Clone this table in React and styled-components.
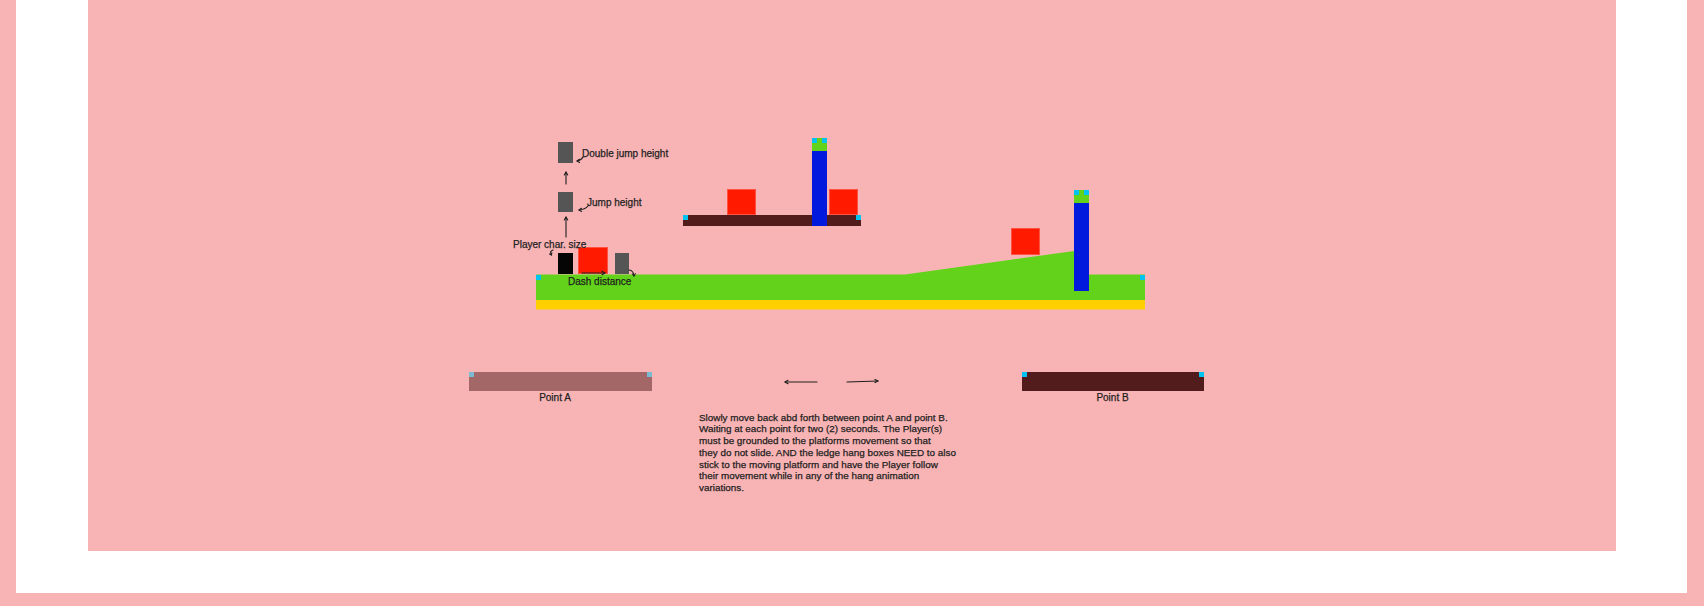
import React from "react";
import styled, { createGlobalStyle } from "styled-components";

// all diagram coordinates below are page pixels; the canvas starts at x = 88
const OX = 88;

const pink = "#f8b4b5";
const maroon = "#531c1c";
const nub = "#00c3f0";
const grass = "#62d31a";
const sand = "#ffd000";
const crate = "#ff1a00";
const steel = "#0019dd";
const ink = "#1e1e1e";

const GlobalStyle = createGlobalStyle`
  html, body {
    margin: 0;
    padding: 0;
    background: ${pink};
  }
  body {
    font-family: "Liberation Sans", Arial, sans-serif;
  }
`;

const Page = styled.div`
  height: 606px;
  box-sizing: border-box;
  padding: 0 17px 13px 16px;
  background: ${pink};
`;

const Sheet = styled.div`
  background: #ffffff;
  padding: 0 71px 42px 72px;
`;

const Canvas = styled.div`
  position: relative;
  height: 551px;
  background: ${pink};
  overflow: hidden;
`;

const Layer = styled.svg`
  position: absolute;
  inset: 0;
  width: 100%;
  height: 100%;
  pointer-events: none;
`;

const Box = styled.div`
  position: absolute;
  left: ${(p) => p.$x - OX}px;
  top: ${(p) => p.$y}px;
  width: ${(p) => p.$w}px;
  height: ${(p) => p.$h}px;
`;

const Crate = styled(Box)`
  background: ${crate};
  box-shadow: inset 0 0 0 1px rgba(255, 120, 110, 0.6);
`;

const Dummy = styled(Box)`
  background: ${(p) => (p.$dark ? "#050505" : "#555555")};
`;

const nubs = `
  &::before,
  &::after {
    content: "";
    position: absolute;
    top: 0;
    width: 5px;
    height: 5px;
    background: ${nub};
  }
  &::before {
    left: 0;
  }
  &::after {
    right: 0;
  }
`;

const Platform = styled(Box)`
  background: ${maroon};
  ${nubs}
`;

// a stop of the moving platform: the bar with its caption under it
const Station = styled.div`
  position: absolute;
  left: ${(p) => p.$x - OX}px;
  top: 372px;
  width: ${(p) => p.$w}px;
  display: flex;
  flex-direction: column;
  align-items: center;
`;

const Bar = styled.div`
  position: relative;
  align-self: stretch;
  height: 19px;
  background: ${maroon};
  opacity: ${(p) => (p.$faded ? 0.5 : 1)};
  ${nubs}
`;

const Caption = styled.span`
  margin-top: 0.5px;
  margin-right: ${(p) => p.$nudge || 0}px;
  font-size: 10px;
  line-height: 12px;
  color: ${ink};
  -webkit-text-stroke: 0.25px ${ink};
`;

const Pillar = styled(Box)`
  display: flex;
  flex-direction: column;
`;

const Cap = styled.div`
  position: relative;
  height: 13px;
  background: ${grass};
  ${nubs}
`;

const Shaft = styled.div`
  flex: 1;
  background: ${steel};
`;

const Label = styled.div`
  position: absolute;
  left: ${(p) => p.$x - OX}px;
  top: ${(p) => p.$y}px;
  font-size: 10px;
  line-height: 12px;
  color: ${ink};
  -webkit-text-stroke: 0.25px ${ink};
  white-space: nowrap;
`;

const Note = styled.p`
  position: absolute;
  left: ${699 - OX}px;
  top: 411.5px;
  margin: 0;
  font-size: 9.9px;
  line-height: 11.8px;
  color: ${ink};
  -webkit-text-stroke: 0.25px ${ink};
  white-space: pre;
`;

const note = `Slowly move back abd forth between point A and point B.
Waiting at each point for two (2) seconds. The Player(s)
must be grounded to the platforms movement so that
they do not slide. AND the ledge hang boxes NEED to also
stick to the moving platform and have the Player follow
their movement while in any of the hang animation
variations.`;

// hand-drawn arrows: [shaft path, head path]
const arrows = [
  ["M566 184 L566 172", "M564.3 175 L566 172 L567.7 175"],
  ["M566 237 L566 217", "M564.3 220 L566 217 L567.7 220"],
  ["M582 273 L605 273", "M602 271.3 L605 273 L602 274.7"],
  ["M817 382 L785 382", "M788 380.3 L785 382 L788 383.7"],
  ["M847 382 L878 381", "M875 379.4 L878 381 L875 382.6"],
  ["M583 157 Q581 160.5 577 161", "M579.5 159.3 L577 161 L579.6 162.4"],
  ["M588 206 Q585 209.5 579 210", "M581.5 208.3 L579 210 L581.6 211.4"],
  ["M553 250 Q549 251.5 551.5 255", "M549.5 254 L551.5 255 L551.8 252.8"],
  ["M629 270 Q633.5 270.5 634 276", "M632.3 274 L634 276 L635.4 273.8"],
];

const Terrain = () => (
  <Layer viewBox={`${OX} 0 1528 551`}>
    <polygon
      points="536,274.5 905,274.5 1074,251 1074,274.5 1145,274.5 1145,300 536,300"
      fill={grass}
    />
    <rect x="536" y="300" width="609" height="9.5" fill={sand} />
    <rect x="536" y="275" width="5" height="5" fill={nub} />
    <rect x="1140" y="275" width="5" height="5" fill={nub} />
  </Layer>
);

const Annotations = () => (
  <Layer viewBox={`${OX} 0 1528 551`}>
    <g fill="none" stroke={ink} strokeWidth="1.1" strokeLinecap="round" strokeLinejoin="round">
      {arrows.map(([shaft, head], i) => (
        <g key={i}>
          <path d={shaft} />
          <path d={head} />
        </g>
      ))}
    </g>
  </Layer>
);

export default function App() {
  return (
    <>
      <GlobalStyle />
      <Page>
        <Sheet>
          <Canvas>
            <Terrain />

            {/* raised ledge */}
            <Platform $x={683} $y={215} $w={178} $h={11} />
            <Crate $x={727} $y={189} $w={29} $h={26} />
            <Crate $x={829} $y={189} $w={29} $h={26} />
            <Pillar $x={812} $y={138} $w={15} $h={88}>
              <Cap />
              <Shaft />
            </Pillar>

            {/* slope + wall */}
            <Crate $x={1011} $y={228} $w={29} $h={27} />
            <Pillar $x={1074} $y={190} $w={15} $h={101}>
              <Cap />
              <Shaft />
            </Pillar>

            {/* player reference sizes */}
            <Dummy $x={558} $y={142} $w={15} $h={21} />
            <Dummy $x={558} $y={192} $w={15} $h={20} />
            <Dummy $dark $x={558} $y={253} $w={15} $h={21} />
            <Crate $x={578} $y={247} $w={30} $h={27} />
            <Dummy $x={615} $y={253} $w={14} $h={21} />

            <Label $x={582} $y={148}>Double jump height</Label>
            <Label $x={587} $y={196.5}>Jump height</Label>
            <Label $x={513} $y={239}>Player char. size</Label>
            <Label $x={568} $y={276}>Dash distance</Label>

            {/* moving platform route */}
            <Station $x={469} $w={183}>
              <Bar $faded />
              <Caption $nudge={11}>Point A</Caption>
            </Station>
            <Station $x={1022} $w={182}>
              <Bar />
              <Caption $nudge={1}>Point B</Caption>
            </Station>

            <Note>{note}</Note>

            <Annotations />
          </Canvas>
        </Sheet>
      </Page>
    </>
  );
}
